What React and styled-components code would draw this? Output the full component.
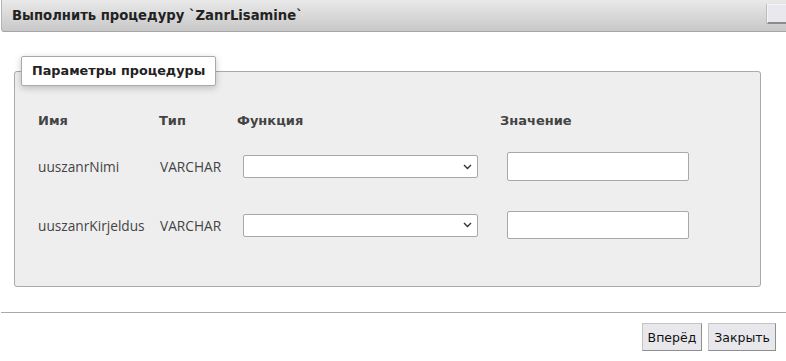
import React from "react";
import styled, { createGlobalStyle } from "styled-components";

const Global = createGlobalStyle`
  html, body { margin: 0; padding: 0; background: #fff; }
  body { width: 786px; height: 361px; overflow: hidden; font-family: "DejaVu Sans", Verdana, sans-serif; }
`;

const Dialog = styled.div`
  width: 786px;
  height: 361px;
  display: flex;
  flex-direction: column;
  background: #fff;
`;

const Header = styled.div`
  height: 31px;
  margin-left: 1px;
  display: flex;
  align-items: center;
  justify-content: space-between;
  background: linear-gradient(#e9e9e9, #c8c8c8);
  border-left: 1px solid #b4b4b4;
  border-bottom: 1px solid #a6a6a6;
  border-bottom-left-radius: 3px;
  overflow: hidden;
`;

const Title = styled.div`
  padding-left: 10px;
  font-weight: bold;
  font-size: 13.2px;
  color: #222;
`;

const CloseBox = styled.div`
  width: 22px;
  height: 17px;
  margin-right: -4px;
  margin-bottom: 4px;
  background: #e8e8ee;
  border-left: 1px solid #f4f4f6;
  border-top: 1px solid #f4f4f6;
  border-bottom: 2px solid #8c8c8c;
  box-shadow: -1px 0 0 #bdbdbd;
`;

const Body = styled.div`
  padding: 24px 25px 0 14px;
`;

const Fieldset = styled.fieldset`
  margin: 0;
  padding: 0 6px;
  height: 231px;
  border: 1px solid #aaa;
  border-radius: 3px;
  background: #eee;
  box-sizing: border-box;
`;

const Legend = styled.legend`
  padding: 7px 10px 7px 10px;
  background: #fff;
  border: 1px solid #aaa;
  border-radius: 2px;
  box-shadow: 0 2px 7px rgba(0, 0, 0, 0.22);
  font-weight: bold;
  font-size: 12.8px;
  color: #222;
  line-height: 14px;
`;

const Grid = styled.div`
  display: grid;
  grid-template-columns: 121px 78px 263px 1fr;
  grid-template-rows: 24px 69px 48px;
  padding: 22px 0 0 17px;
  align-items: center;
`;

const HeadCell = styled.div`
  font-family: "DejaVu Sans", Verdana, sans-serif;
  font-weight: bold;
  font-size: 13px;
  color: #444;
`;

const Cell = styled.div`
  font-family: "Open Sans", "Segoe UI", sans-serif;
  font-size: 13.7px;
  color: #444;
  padding-left: ${(p) => p.$pl || 0}px;
`;

const Select = styled.select`
  width: 235px;
  height: 23px;
  margin-left: 6px;
  border: 1px solid #a9a9a9;
  border-radius: 2px;
  background: #fff;
  font-family: "Open Sans", sans-serif;
  font-size: 12px;
  padding: 0 4px;
  box-sizing: border-box;
  appearance: none;
  background-image: url("data:image/svg+xml;utf8,<svg xmlns='http://www.w3.org/2000/svg' width='9' height='6'><path d='M1 1l3.5 3.5L8 1' fill='none' stroke='%23333' stroke-width='1.4'/></svg>");
  background-repeat: no-repeat;
  background-position: right 5px center;
`;

const Input = styled.input`
  width: 182px;
  height: ${(p) => p.$h || 29}px;
  margin-left: 7px;
  border: 1px solid #a9a9a9;
  border-radius: 2px;
  background: #fff;
  box-sizing: border-box;
`;

const Footer = styled.div`
  margin-top: 25px;
  border-top: 1px solid #aaa;
  margin-left: 1px;
  display: flex;
  justify-content: flex-end;
  gap: 6px;
  padding: 10px 10px 0 0;
`;

const Button = styled.button`
  height: 28px;
  padding: 0 5px;
  font-family: "DejaVu Sans", Verdana, sans-serif;
  font-size: 12.5px;
  color: #111;
  background: #e8e8ec;
  border: 1px solid #c4c4c4;
  border-right-color: #8f8f8f;
  border-bottom-color: #8f8f8f;
  border-radius: 0;
`;

const rows = [
  { name: "uuszanrNimi", type: "VARCHAR", h: 29 },
  { name: "uuszanrKirjeldus", type: "VARCHAR", h: 28 },
];

export default function App() {
  return (
    <>
      <Global />
      <Dialog>
        <Header>
          <Title>Выполнить процедуру `ZanrLisamine`</Title>
          <CloseBox />
        </Header>
        <Body>
          <Fieldset>
            <Legend>Параметры процедуры</Legend>
            <Grid>
              <HeadCell>Имя</HeadCell>
              <HeadCell>Тип</HeadCell>
              <HeadCell>Функция</HeadCell>
              <HeadCell>Значение</HeadCell>
              {rows.map((r) => (
                <React.Fragment key={r.name}>
                  <Cell>{r.name}</Cell>
                  <Cell $pl={1}>{r.type}</Cell>
                  <Select>
                    <option></option>
                  </Select>
                  <Input $h={r.h} />
                </React.Fragment>
              ))}
            </Grid>
          </Fieldset>
        </Body>
        <Footer>
          <Button>Вперёд</Button>
          <Button>Закрыть</Button>
        </Footer>
      </Dialog>
    </>
  );
}
